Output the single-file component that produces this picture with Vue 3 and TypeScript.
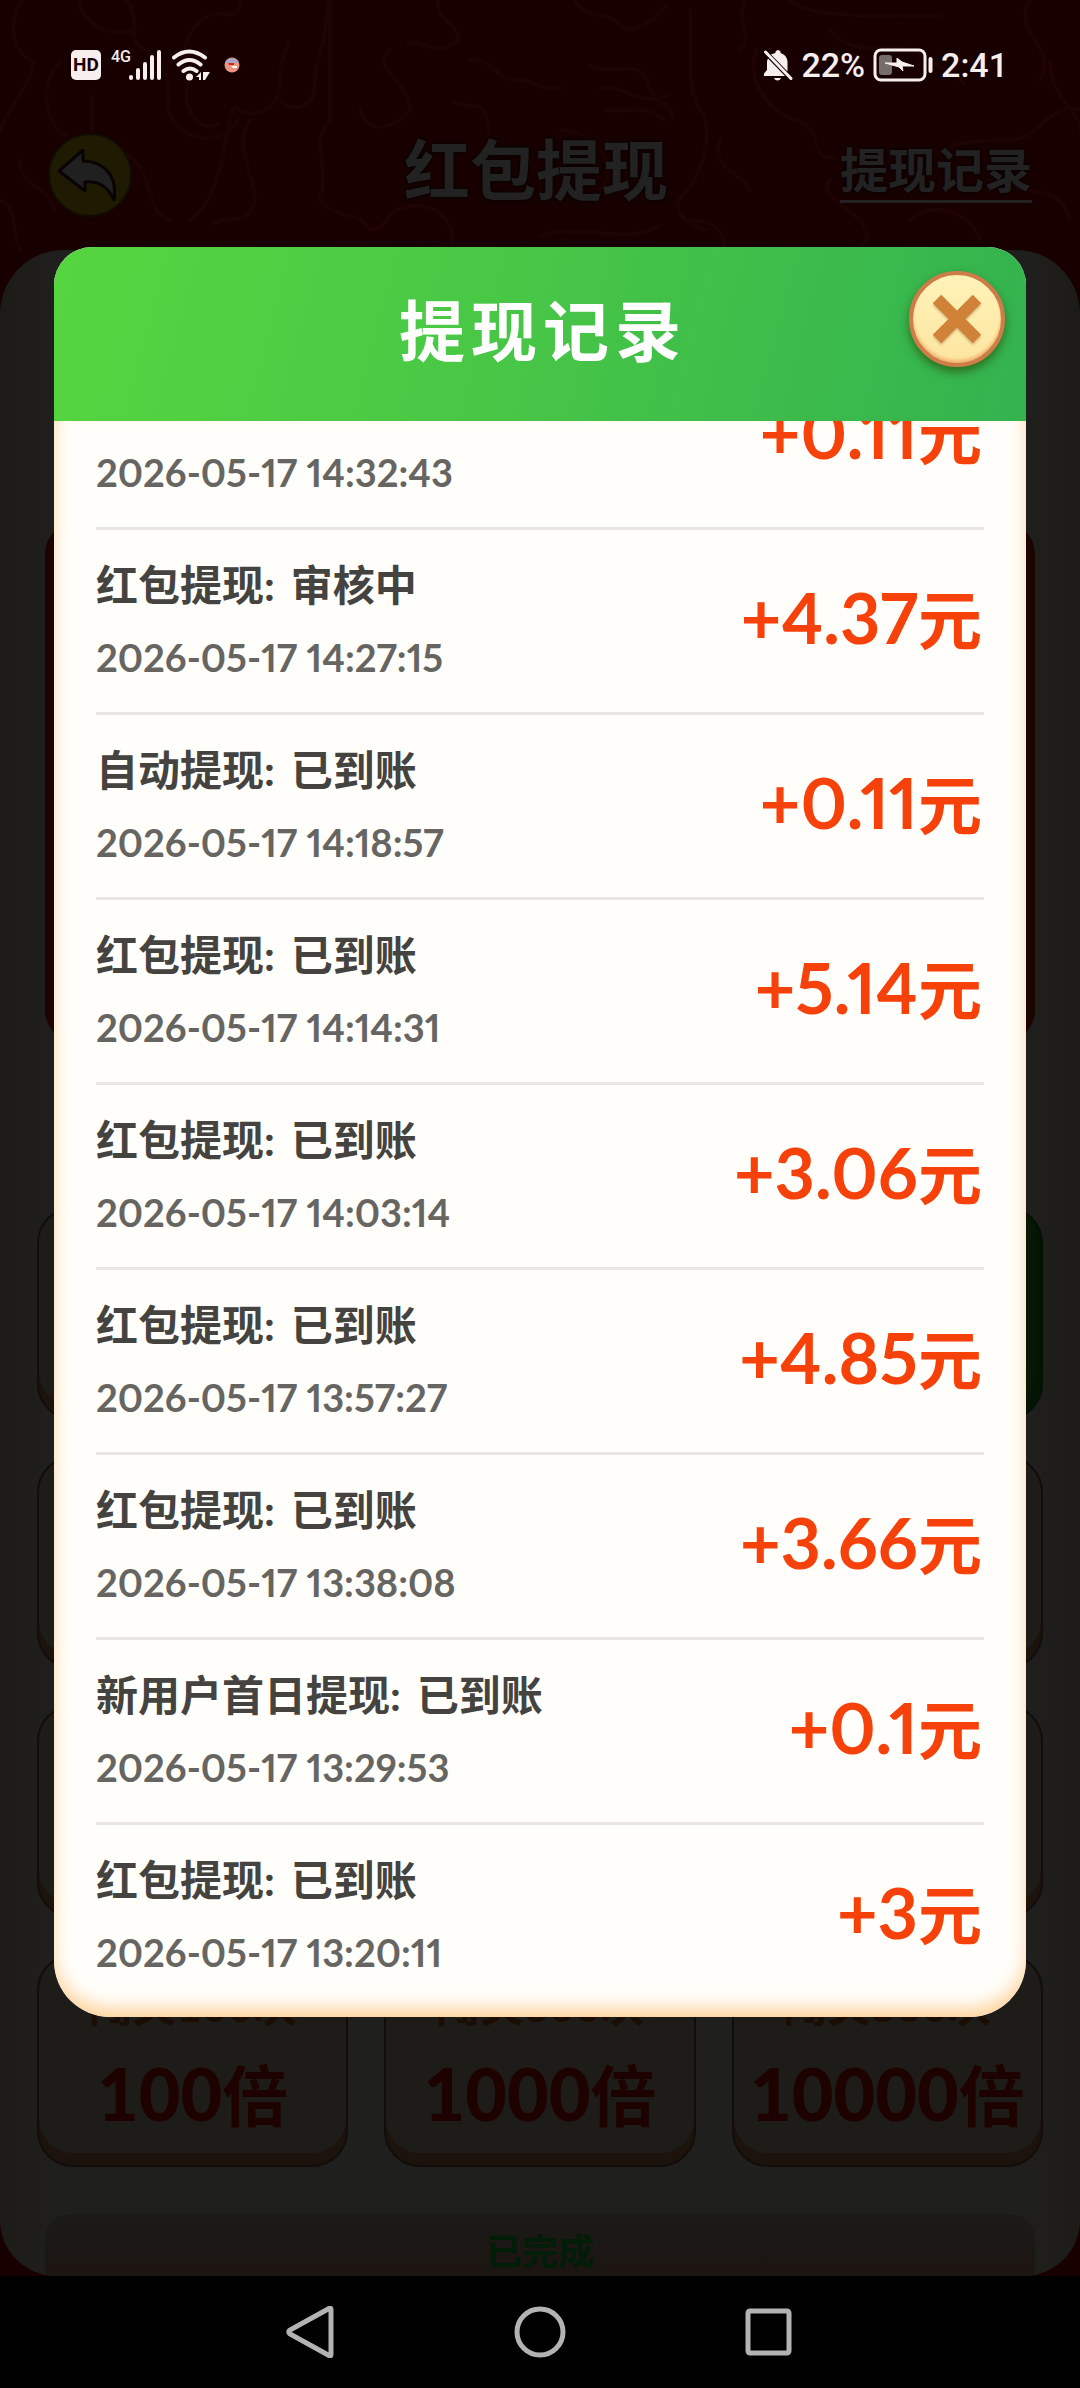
<script setup lang="ts">
interface WithdrawRecord {
  kind: string
  status: string
  time: string
  amount: string
}

interface TaskCard {
  label: string
  reward: string
  active?: boolean
}

const records: WithdrawRecord[] = [
  { kind: '自动提现', status: '已到账', time: '2026-05-17 14:32:43', amount: '+0.11' },
  { kind: '红包提现', status: '审核中', time: '2026-05-17 14:27:15', amount: '+4.37' },
  { kind: '自动提现', status: '已到账', time: '2026-05-17 14:18:57', amount: '+0.11' },
  { kind: '红包提现', status: '已到账', time: '2026-05-17 14:14:31', amount: '+5.14' },
  { kind: '红包提现', status: '已到账', time: '2026-05-17 14:03:14', amount: '+3.06' },
  { kind: '红包提现', status: '已到账', time: '2026-05-17 13:57:27', amount: '+4.85' },
  { kind: '红包提现', status: '已到账', time: '2026-05-17 13:38:08', amount: '+3.66' },
  { kind: '新用户首日提现', status: '已到账', time: '2026-05-17 13:29:53', amount: '+0.1' },
  { kind: '红包提现', status: '已到账', time: '2026-05-17 13:20:11', amount: '+3' },
]

const cards: TaskCard[] = [
  { label: '', reward: '' },
  { label: '', reward: '' },
  { label: '', reward: '', active: true },
  { label: '', reward: '' },
  { label: '', reward: '' },
  { label: '', reward: '' },
  { label: '', reward: '' },
  { label: '', reward: '' },
  { label: '', reward: '' },
  { label: '闯关100次', reward: '100' },
  { label: '闯关300次', reward: '1000' },
  { label: '闯关500次', reward: '10000' },
]
</script>

<template>
  <div class="screen">
    <svg class="pattern" viewBox="0 0 1080 260" preserveAspectRatio="xMidYMin slice" aria-hidden="true">
      <g fill="none" stroke="#1e0303" stroke-width="4" stroke-linecap="round">
        <path d="M22 0c-14 24-12 50 12 62c-4 26-24 40-34 70M78 0c6 30 46 40 58 28M126 0c18 20-4 40 20 50s24 50 22 60c10 30 50 40 70 10" />
        <path d="M60 62c-20 20-18 60 6 74M92 96v40M186 60c-6-26 20-50 36-46s20-10 16-14M188 80c-6 30 10 54 30 44" />
        <path d="M232 110c-10 50-14 90-42 110M250 120c-20 30 10 60 4 84s-30 10-40 20M236 108c22 14 42 0 44-24c0-20 4-30 8-42M280 100c14 16 34 4 34-10c0-30 12-40 14-90" />
        <path d="M330 0v120c-20 20 0 50-10 80c16 20 40 10 50 30c20 0 10-20 40-24s50 20 40 50" />
        <path d="M438 0c-4 20 20 22 20 40c-20 20-40-4-50 4M470 60c30 0 20 20 50 20c30 6 20 12 40 8M360 110c10 30 40 14 50 0c0-30-40-40-20-60M455 102c20 10 30-8 34 30" />
        <path d="M575 0c10 20 30 10 44 24s36-4 48-20M690 10c4 30-6 80 10 100s0 70-16 84s0 30 22 36M745 0c-10 20 10 40-6 50M756 50c-10 30 10 60 40 70s10 40 40 38" />
        <path d="M790 0c20 20 90 14 150 16M830 30c20 30 70 10 90 24s40 24 44 30M1030 0c-20 30 30 50 10 80M1050 60c0 40 30 50 30 70M1080 110c-30-10-40 30-70 30s-60 0-80 20" />
        <path d="M590 66c30 10 50-10 60 20s20 10 22 30M600 90c20-10 40 20 70 4M604 110c20 4 40-8 60 10M560 130c40 0 60 40 40 60M720 140c-10 30 20 30 30 50M830 180c-20 20 60 40 30 66M910 220c20-20 60-10 70 20M1010 180c10 20 50 0 60 40" />
        <path d="M540 236c40-14 80 10 120-10M690 220c30 0 40 20 30 40M20 160c0 30 30 24 34 50M0 200c20 10 10 30 20 50M120 150c40 20 20 60 50 70" />
      </g>
    </svg>

    <header class="status-bar">
      <div class="status-left">
        <span class="hd">HD</span>
        <div class="cell">
          <span class="net">4G</span>
          <svg class="bars" viewBox="0 0 32 32" aria-hidden="true">
            <path d="M2 28v1M9 21v8M16 15v14M23 8v21M30 3v26" stroke="#f7eeee" stroke-width="4" stroke-linecap="round" />
          </svg>
        </div>
        <svg class="wifi" viewBox="0 0 40 32" aria-hidden="true">
          <g fill="none" stroke="#f7eeee" stroke-width="4" stroke-linecap="round">
            <path d="M3 8.500q15-12 31 0M7.500 15.500q11-9 22 0M12.500 22q6.500-5 13 0" />
          </g>
          <circle cx="18.500" cy="28" r="3.500" fill="#f7eeee" />
          <path d="M25 28l5-5v8h-2v-3zM32 23h7l-5 8h-2z" fill="#f7eeee" />
        </svg>
        <svg class="notice" viewBox="0 0 16 16" aria-hidden="true">
          <circle cx="8" cy="8" r="7.500" fill="#e9957f" />
          <path d="M1 6a7.500 7.500 0 0 1 14 0z" fill="#a9a4c8" />
          <path d="M4 6h6v2h-5z" fill="#c8301c" />
          <path d="M7 9h6v2h-4z" fill="#fff" />
        </svg>
      </div>
      <div class="status-right">
        <svg class="bell" viewBox="0 0 30 32" aria-hidden="true">
          <path d="M8 5.500L24.500 22.500V13C24.500 8 21 5 17.500 4V2.500q-2.500-3-5 0V4Q9.500 4.500 8 5.500zM5 9.500L22 27H1v-2.500l3-3.500V13q0-2 1-3.500zM11 29h7q-1 2.500-3.500 2.500T11 29z" fill="#f7eeee" />
          <path d="M2.500 3L28 29.500" stroke="#f7eeee" stroke-width="3" stroke-linecap="round" />
        </svg>
        <span>22%</span>
        <svg class="battery" viewBox="0 0 60 34" aria-hidden="true">
          <rect x="2" y="2" width="50" height="30" rx="6" fill="none" stroke="#f7eeee" stroke-width="3" />
          <rect x="6" y="7" width="13" height="20" rx="3" fill="#776c6c" />
          <path d="M24 10l5 4 12 4-12 0 1 5-4-4-14-4 12 0z" fill="#f7eeee" stroke="#f7eeee" stroke-width="1" />
          <path d="M57.500 11v12" stroke="#f7eeee" stroke-width="4" stroke-linecap="round" />
        </svg>
        <span>2:41</span>
      </div>
    </header>

    <div class="page-head">
      <button class="back" type="button" aria-label="返回">
        <svg viewBox="0 0 84 84" aria-hidden="true">
          <circle cx="42" cy="42" r="41" fill="#1f1a02" stroke="#120c00" stroke-width="2" />
          <path d="M11 38L35 17v11c20 0 35 14 31 39c-7-15-16-19-29-18v9z" fill="#202020" stroke="#090303" stroke-width="3" stroke-linejoin="round" />
        </svg>
      </button>
      <h1>红包提现</h1>
      <a class="history" href="#records">提现记录</a>
    </div>

    <main class="panel">
      <div class="banner"></div>
      <div class="cards">
        <div v-for="(card, i) in cards" :key="i" class="card" :class="{ active: card.active }">
          <template v-if="card.reward">
            <span class="card-label">{{ card.label }}</span>
            <span class="card-reward"><b>{{ card.reward }}</b>倍</span>
          </template>
        </div>
      </div>
      <div class="done">已完成</div>
    </main>

    <nav class="nav-bar">
      <button type="button" aria-label="后退">
        <svg viewBox="0 0 52 52" aria-hidden="true"><path d="M47 3.500v45q0 2-2 1L6 28q-2.500-2 0-4L45 2.500q2-1 2 1z" /></svg>
      </button>
      <button type="button" aria-label="主屏幕">
        <svg viewBox="0 0 52 52" aria-hidden="true"><circle cx="26" cy="26" r="23" /></svg>
      </button>
      <button type="button" aria-label="最近任务">
        <svg viewBox="0 0 52 52" aria-hidden="true"><rect x="4" y="5" width="41" height="42" rx="2" /></svg>
      </button>
    </nav>

    <div class="overlay">
      <section id="records" class="dialog" role="dialog" aria-labelledby="dialog-title">
        <div class="dialog-head">
          <h2 id="dialog-title">提现记录</h2>
          <button class="close" type="button" aria-label="关闭">
            <svg viewBox="0 0 48 48" aria-hidden="true"><path d="M4 4l40 40M44 4L4 44" /></svg>
          </button>
        </div>
        <div class="scroller">
          <ul>
            <li v-for="r in records" :key="r.time">
              <div class="info">
                <p class="kind"><span>{{ r.kind }}:</span><span>{{ r.status }}</span></p>
                <time>{{ r.time }}</time>
              </div>
              <p class="amount">{{ r.amount }}<span>元</span></p>
            </li>
          </ul>
        </div>
      </section>
    </div>
  </div>
</template>

<style>
body {
  margin: 0;
  background: #000;
}
</style>

<style scoped>
.screen {
  position: relative;
  display: flex;
  flex-direction: column;
  min-height: 100vh;
  background: #180000;
  font-family: Lato, "Noto Sans CJK SC", sans-serif;
  font-weight: 700;
  overflow: hidden;
}

h1,
h2,
p,
ul {
  margin: 0;
  padding: 0;
}

button {
  padding: 0;
  border: 0;
  background: none;
}

svg {
  display: block;
}

.pattern {
  position: absolute;
  top: 0;
  left: 0;
  width: 100%;
  height: 260px;
}

.status-bar {
  position: relative;
  display: flex;
  justify-content: space-between;
  align-items: center;
  height: 130px;
  padding: 0 72px 0 71px;
  box-sizing: border-box;
  color: #f7eeee;
  font-family: Roboto, sans-serif;
  font-size: 34px;
  font-weight: 500;
}

.status-left,
.status-right {
  display: flex;
  align-items: center;
}

.status-right {
  gap: 8px;
}

.hd {
  width: 30px;
  height: 30px;
  margin-right: 10px;
  border-radius: 5px;
  background: #f7eeee;
  color: #180000;
  font-size: 19px;
  font-weight: 700;
  line-height: 30px;
  text-align: center;
}

.cell {
  display: flex;
  align-items: flex-start;
  margin-right: 10px;
}

.net {
  width: 18px;
  font-size: 16px;
  line-height: 16px;
}

.bars {
  width: 32px;
  height: 32px;
}

.wifi {
  width: 40px;
  height: 32px;
  margin-right: 13px;
}

.notice {
  width: 16px;
  height: 16px;
}

.bell {
  width: 30px;
  height: 32px;
}

.battery {
  width: 60px;
  height: 34px;
}

.page-head {
  position: relative;
  display: flex;
  justify-content: space-between;
  align-items: flex-start;
  height: 120px;
  padding: 0 48px;
  box-sizing: border-box;
  color: #222;
}

.back,
.history {
  flex: none;
  margin-top: 3px;
}

.back {
  width: 84px;
  height: 84px;
}

.back svg {
  width: 84px;
  height: 84px;
}

h1 {
  flex: 1;
  padding-left: 100px;
  font-size: 66px;
  line-height: 80px;
  text-align: center;
  text-shadow: 0 0 4px #000;
}

.history {
  margin-top: 10px;
  border-bottom: 3px solid #222;
  color: #222;
  font-size: 48px;
  line-height: 60px;
  text-decoration: none;
  text-shadow: 0 0 4px #000;
}

.panel {
  position: relative;
  display: flex;
  flex: 1;
  flex-direction: column;
  border-radius: 64px 64px 56px 56px;
  background: linear-gradient(90deg, #1c1b17, #1f1f1d 5%, #1f1f1d 95%, #1c1b17);
  overflow: hidden;
}

.banner {
  height: 520px;
  margin: 272px 45px 0;
  border-radius: 32px;
  background: #1c0400;
}

.cards {
  display: grid;
  grid-template-columns: repeat(3, 1fr);
  grid-auto-rows: 213px;
  gap: 36px;
  margin: 165px 37px 0;
}

.card {
  display: flex;
  flex-direction: column;
  align-items: center;
  border: 2px solid #120d0a;
  border-radius: 36px;
  background: #1e1c19;
  box-shadow: inset 0 -12px 0 #1b130c;
  box-sizing: border-box;
}

.card.active {
  border-color: #041004;
  background: #0c1a08;
  box-shadow: inset -8px -8px 12px #041504;
}

.card-label {
  margin-top: 24px;
  color: #1a0d04;
  font-size: 44px;
  line-height: 50px;
}

.card-reward {
  margin-top: 18px;
  color: #1d0200;
  font-size: 66px;
  line-height: 90px;
}

.card-reward b {
  font-size: 72px;
}

.done {
  flex: 1;
  margin: 47px 45px 0;
  padding-top: 12px;
  border-radius: 24px 24px 0 0;
  background: linear-gradient(#1b1a17, #1c1511);
  color: #001d08;
  font-size: 36px;
  line-height: 50px;
  text-align: center;
}

.nav-bar {
  position: relative;
  display: flex;
  justify-content: center;
  align-items: center;
  gap: 178px;
  height: 112px;
  background: #000;
}

.nav-bar svg {
  width: 52px;
  height: 52px;
  fill: none;
  stroke: #b3b3b3;
  stroke-width: 5;
}

.overlay {
  position: absolute;
  inset: 0;
  display: flex;
  padding: 247px 5% 371px;
}

.dialog {
  position: relative;
  display: flex;
  flex: 1;
  flex-direction: column;
  border-radius: 38px 38px 56px 56px;
  background: #fffefa;
  overflow: hidden;
}

.dialog-head {
  display: flex;
  justify-content: center;
  flex: none;
  height: 174px;
  background: linear-gradient(105deg, #55d63f, #48c746 45%, #33b24f);
}

h2 {
  margin-top: 38px;
  padding-left: 6px;
  color: #fff;
  font-size: 66px;
  line-height: 92px;
  letter-spacing: 6px;
}

.close {
  position: absolute;
  top: 24px;
  right: 21px;
  display: flex;
  justify-content: center;
  align-items: center;
  width: 96px;
  height: 96px;
  border: 4px solid #cf7d48;
  border-radius: 50%;
  background: linear-gradient(#fff3b8, #fde5a0);
  box-shadow: 0 5px 10px rgba(40, 60, 0, 0.6), inset 0 -3px 3px #f2b878;
}

.close svg {
  width: 48px;
  height: 48px;
  fill: none;
  stroke: #cf8238;
  stroke-width: 12;
  filter: drop-shadow(0 2px 1px rgba(150, 110, 50, 0.4));
}

/* Reversed column keeps the list resting on its oldest entry. */
.scroller {
  display: flex;
  flex: 1 1 0;
  flex-direction: column-reverse;
  min-height: 0;
  padding: 0 42px 7px;
  border-radius: 0 0 56px 56px;
  box-shadow: inset 0 -10px 18px -2px #ffcf96;
  overflow-y: auto;
  scrollbar-width: none;
}

li {
  display: flex;
  justify-content: space-between;
  align-items: center;
  height: 185px;
  padding-bottom: 5px;
  border-bottom: 3px solid #e8e7e3;
  box-sizing: border-box;
}

li:last-child {
  border-color: transparent;
}

.info {
  display: flex;
  flex-direction: column;
  gap: 20px;
}

.kind {
  display: flex;
  gap: 16px;
  color: #444340;
  font-size: 42px;
  line-height: 56px;
}

time {
  color: #666562;
  font-size: 38px;
  line-height: 48px;
  font-variant-numeric: proportional-nums;
}

.amount {
  padding-right: 2px;
  color: #f6420a;
  font-size: 70px;
  line-height: 88px;
  font-variant-numeric: proportional-nums;
}

.amount span {
  font-size: 64px;
}
</style>
